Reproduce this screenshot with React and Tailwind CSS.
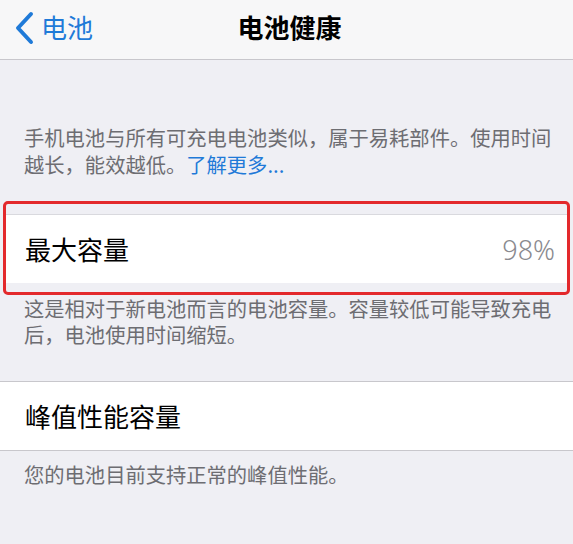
import React from 'react';

const font = { fontFamily: '"Noto Sans CJK SC", "Noto Sans", sans-serif' };

function NavBar() {
  return (
    <div className="relative flex h-[60px] items-center border-b border-[#c8c7cc] bg-[#f7f7f8]">
      <div className="flex items-center pl-[14px] text-[#1f7ad8]">
        <svg width="22" height="34" viewBox="0 0 22 34" className="mt-[-4px]">
          <path d="M17 3 L4 17 L17 31" fill="none" stroke="currentColor" strokeWidth="4" strokeLinecap="round" strokeLinejoin="round" />
        </svg>
        <span className="ml-[5px] mt-[-6px] text-[26px] leading-none">电池</span>
      </div>
      <div className="pointer-events-none absolute inset-x-0 top-0 flex h-full items-center justify-center pl-[6px]">
        <span className="mt-[-6px] text-[26px] font-bold leading-none text-black">电池健康</span>
      </div>
    </div>
  );
}

export default function App() {
  return (
    <div className="h-[544px] w-[573px] overflow-hidden bg-[#efeff4]" style={font}>
      <NavBar />

      <p className="pl-[24px] pr-[16px] pt-[64px] text-[20.3px] leading-[27px] text-[#6d6d72]">
        手机电池与所有可充电电池类似，属于易耗部件。使用时间越长，能效越低。<span className="text-[#1f7ad8]">了解更多...</span>
      </p>

      <div className="mx-[3px] mt-[23px] rounded-[5px] border-[3px] border-[#e3292c] pt-[10px] pb-[9px]">
        <div className="flex h-[69px] items-center justify-between border-t border-[#d9d9de] bg-white pl-[19px] pr-[12px]">
          <span className="text-[26px] leading-none text-black">最大容量</span>
          <span className="text-[27px] font-light leading-none text-[#8a8a8f]" style={{ fontFamily: '"Noto Sans", sans-serif' }}>98%</span>
        </div>
      </div>

      <p className="pl-[24px] pr-[16px] text-[20.3px] leading-[26px] text-[#6d6d72]">
        这是相对于新电池而言的电池容量。容量较低可能导致充电后，电池使用时间缩短。
      </p>

      <div className="mt-[34px] flex h-[70px] items-center border-y border-[#c8c7cc] bg-white pl-[25px]">
        <span className="text-[26px] leading-none text-black">峰值性能容量</span>
      </div>

      <p className="pl-[24px] pr-[16px] pt-[10px] text-[20.3px] leading-[26px] text-[#6d6d72]">
        您的电池目前支持正常的峰值性能。
      </p>
    </div>
  );
}
